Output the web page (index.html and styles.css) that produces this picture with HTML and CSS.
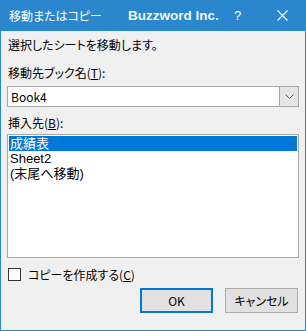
FILE: index.html
```html
<!doctype html>
<html lang="ja">
  <head>
    <meta charset="UTF-8" />
    <title>移動またはコピー</title>
    <link rel="stylesheet" href="styles.css">
  </head>
  <body>
    <div class="dialog">
      <div class="titlebar">
        <span class="title">移動またはコピー</span>
        <span class="brand">Buzzword Inc.</span>
        <span class="help">?</span>
        <span class="close">
          <svg width="11" height="11" viewBox="0 0 11 11">
            <path d="M0.5 0.5 L10.5 10.5 M10.5 0.5 L0.5 10.5" stroke="#fff" stroke-width="1.1" fill="none" />
          </svg>
        </span>
      </div>

      <div class="content">
        <p class="text">選択したシートを移動します。</p>

        <p class="label label-book">移動先ブック名(<u>T</u>):</p>
        <div class="combo">
          <span class="combo-value">Book4</span>
          <span class="combo-btn">
            <svg width="9" height="5" viewBox="0 0 9 5">
              <path d="M0.5 0.5 L4.5 4.5 L8.5 0.5" stroke="#606060" stroke-width="1" fill="none" />
            </svg>
          </span>
        </div>

        <p class="label label-before">挿入先(<u>B</u>):</p>
        <div class="listbox">
          <div class="item selected">成績表</div>
          <div class="item">Sheet2</div>
          <div class="item">(末尾へ移動)</div>
        </div>

        <label class="check">
          <span class="box"></span>
          <span>コピーを作成する(<u>C</u>)</span>
        </label>

        <div class="actions">
          <button class="btn btn-default">OK</button>
          <button class="btn">キャンセル</button>
        </div>
      </div>
    </div>
  </body>
</html>
```

FILE: styles.css
```css
body {
  margin: 0;
  font-family: "Noto Sans CJK JP", sans-serif;
  font-feature-settings: "palt";
  font-size: 12px;
  color: #000;
  background-color: #f0f0f0;
}

.dialog {
  width: 304px;
  height: 330px;
  border: 1px solid #2b87cd;
  border-top: none;
  background-color: #f0f0f0;
  display: flex;
  flex-direction: column;
}

.titlebar {
  height: 31px;
  padding-left: 8px;
  background-color: #2b87cd;
  color: #fff;
  display: flex;
  align-items: center;
}

.title {
  width: 119px;
  font-size: 12px;
  line-height: 16px;
  white-space: nowrap;
}

.brand {
  width: 106px;
  font-family: "Liberation Sans", sans-serif;
  font-weight: bold;
  font-size: 13.5px;
  color: #eef5fb;
  white-space: nowrap;
}

.help {
  width: 43px;
  font-family: "Liberation Sans", sans-serif;
  font-size: 13px;
}

.close {
  display: flex;
}

.content {
  padding: 6px 6px 0 6px;
  display: flex;
  flex-direction: column;
}

.text,
.label {
  margin: 0;
  line-height: 16px;
  padding-left: 1px;
}

.label-book {
  margin-top: 12px;
}

.label-before {
  margin-top: 8px;
}

.combo {
  margin-top: 5px;
  height: 19px;
  border: 1px solid #a8a8a8;
  background-color: #fff;
  display: flex;
  align-items: center;
}

.combo-value {
  flex: 1;
  padding-left: 3px;
  font-size: 12px;
}

.combo-btn {
  width: 18px;
  height: 19px;
  border-left: 1px solid #a8a8a8;
  background-color: #e5e5e5;
  display: flex;
  align-items: center;
  justify-content: center;
}

.listbox {
  margin-top: 3px;
  height: 120px;
  border: 1px solid #a8a8a8;
  background-color: #fff;
  padding: 1px;
}

.item {
  height: 15px;
  line-height: 15px;
  font-family: "Liberation Sans", "Noto Sans CJK JP", sans-serif;
  font-size: 13px;
  padding-left: 1px;
  overflow: hidden;
}

.selected {
  background-color: #0078d7;
  color: #fff;
}

.check {
  margin-top: 10px;
  height: 13px;
  display: flex;
  align-items: center;
  gap: 7px;
  line-height: 13px;
  padding-left: 1px;
}

.box {
  width: 11px;
  height: 11px;
  border: 1px solid #333;
  background-color: #fff;
}

.actions {
  margin-top: 7px;
  display: flex;
  justify-content: flex-end;
  gap: 12px;
  padding-right: 1px;
}

.btn {
  width: 73px;
  height: 25px;
  border: 1px solid #adadad;
  background-color: #e1e1e1;
  font-family: "Noto Sans CJK JP", sans-serif;
  font-feature-settings: "palt";
  font-size: 12px;
  padding: 0;
  color: #000;
}

.btn-default {
  border: 2px solid #0078d7;
}
```
